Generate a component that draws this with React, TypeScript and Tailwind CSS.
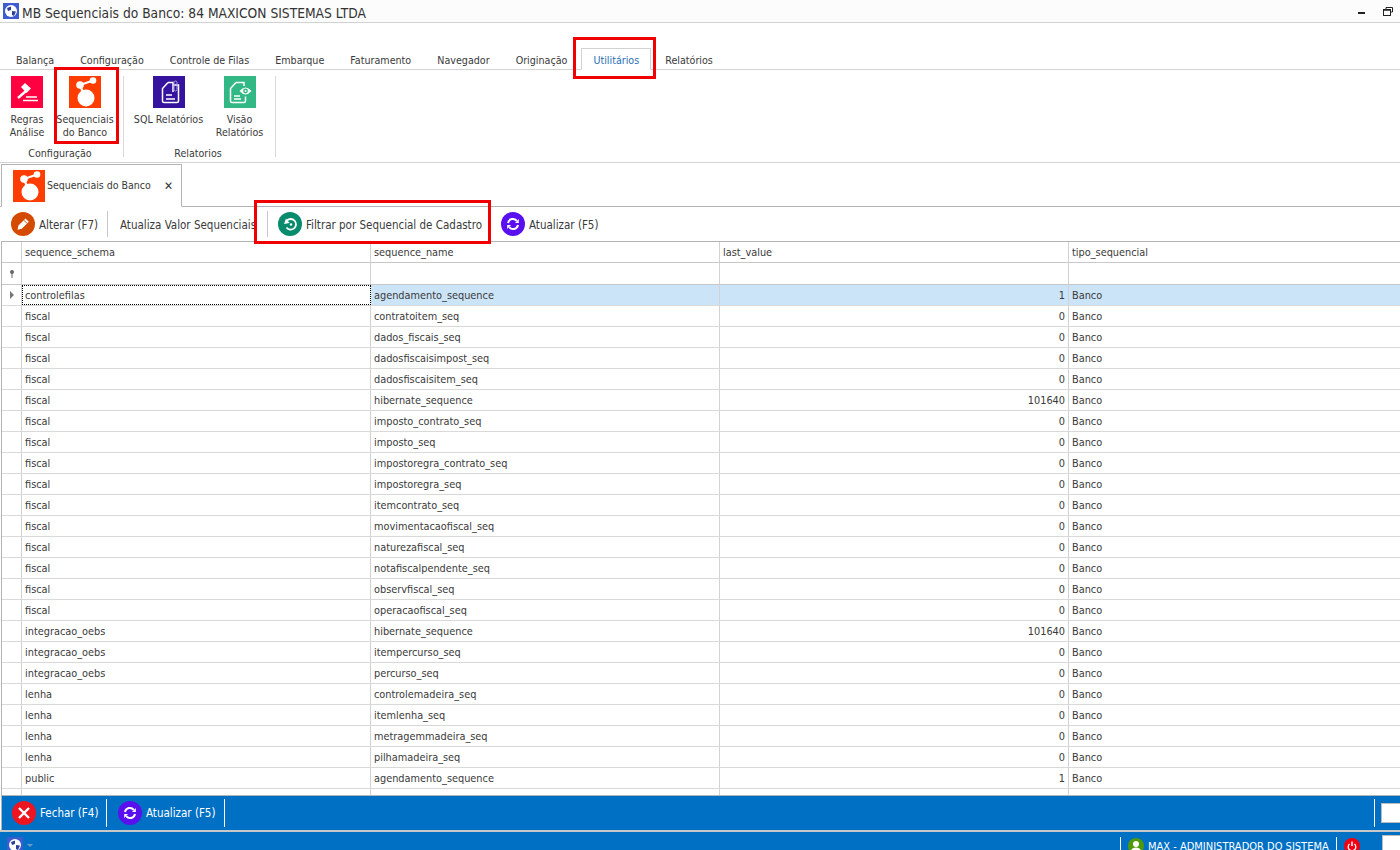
import React from 'react';

const FONT = "font-['DejaVu_Sans_Condensed','Noto_Sans',sans-serif]";

const rows: [string, string, string][] = [
  ['controlefilas', 'agendamento_sequence', '1'],
  ['fiscal', 'contratoitem_seq', '0'],
  ['fiscal', 'dados_fiscais_seq', '0'],
  ['fiscal', 'dadosfiscaisimpost_seq', '0'],
  ['fiscal', 'dadosfiscaisitem_seq', '0'],
  ['fiscal', 'hibernate_sequence', '101640'],
  ['fiscal', 'imposto_contrato_seq', '0'],
  ['fiscal', 'imposto_seq', '0'],
  ['fiscal', 'impostoregra_contrato_seq', '0'],
  ['fiscal', 'impostoregra_seq', '0'],
  ['fiscal', 'itemcontrato_seq', '0'],
  ['fiscal', 'movimentacaofiscal_seq', '0'],
  ['fiscal', 'naturezafiscal_seq', '0'],
  ['fiscal', 'notafiscalpendente_seq', '0'],
  ['fiscal', 'observfiscal_seq', '0'],
  ['fiscal', 'operacaofiscal_seq', '0'],
  ['integracao_oebs', 'hibernate_sequence', '101640'],
  ['integracao_oebs', 'itempercurso_seq', '0'],
  ['integracao_oebs', 'percurso_seq', '0'],
  ['lenha', 'controlemadeira_seq', '0'],
  ['lenha', 'itemlenha_seq', '0'],
  ['lenha', 'metragemmadeira_seq', '0'],
  ['lenha', 'pilhamadeira_seq', '0'],
  ['public', 'agendamento_sequence', '1'],
  ['public', '', ''],
];

const tabs = ['Balança', 'Configuração', 'Controle de Filas', 'Embarque', 'Faturamento', 'Navegador', 'Originação', 'Utilitários', 'Relatórios'];

const SeqIcon = ({ size }: { size: number }) => (
  <svg width={size} height={size} viewBox="0 0 32 32" className="shrink-0">
    <rect width="32" height="32" fill="#ff3d00" />
    <path d="M11 9 L24 4.500 M11 9 L15 19" stroke="#fff" strokeWidth="2.200" />
    <circle cx="11" cy="9" r="3.800" fill="#fff" />
    <circle cx="24" cy="4.500" r="3.300" fill="#fff" />
    <circle cx="17" cy="22" r="8.500" fill="#fff" />
  </svg>
);

const GavelIcon = () => (
  <svg width="32" height="32" viewBox="0 0 32 32" className="shrink-0">
    <rect width="32" height="32" fill="#ff0040" />
    <path d="M7 22 L15 15" stroke="#fff" strokeWidth="2.400" />
    <path d="M10 11 L14 7 L20 12.500 L15.500 17 Z" fill="#fff" />
    <path d="M15 21 H26 M12 24.500 H27" stroke="#fff" strokeWidth="1.500" />
  </svg>
);

const SqlIcon = () => (
  <svg width="32" height="32" viewBox="0 0 32 32" className="shrink-0">
    <rect width="32" height="32" fill="#35139f" />
    <path d="M15 6.500 L9.500 12.500 V25 Q9.500 26.500 11 26.500 H24 Q25.500 26.500 25.500 25 V9 H20" fill="none" stroke="#fff" strokeWidth="1.500" />
    <path d="M15 6.500 H20 V16" fill="none" stroke="#fff" strokeWidth="1.500" />
    <path d="M13 19 H19 M13 23 H22" stroke="#fff" strokeWidth="1.500" />
    <rect x="21" y="5" width="3" height="10" rx="1.500" fill="none" stroke="#a9a0d8" strokeWidth="1" />
  </svg>
);

const VisaoIcon = () => (
  <svg width="32" height="32" viewBox="0 0 32 32" className="shrink-0">
    <rect width="32" height="32" fill="#32b884" />
    <path d="M12 6.500 H20 V10 M12 6.500 L6.500 12.500 V25 Q6.500 26.500 8 26.500 H20 Q21.500 26.500 21.500 25 V20.500" fill="none" stroke="#fff" strokeWidth="1.500" />
    <path d="M10 20 H16 M10 23 H17" stroke="#fff" strokeWidth="1.500" />
    <path d="M15.500 15 Q21.500 8 27.500 15 Q21.500 22 15.500 15 Z" fill="#fff" />
    <circle cx="21.500" cy="15" r="2.400" fill="#32b884" />
    <circle cx="21.500" cy="15" r="1" fill="#fff" />
  </svg>
);

const PencilCircle = () => (
  <svg width="24" height="24" viewBox="0 0 24 24" className="shrink-0">
    <circle cx="12" cy="12" r="12" fill="#d34a00" />
    <path d="M6.500 17.800 L7.500 13.500 L14.500 6.500 L17.800 9.800 L10.800 16.800 Z" fill="#fff" />
    <path d="M12.800 8.200 L16 11.400" stroke="#d34a00" strokeWidth="1" />
  </svg>
);

const FilterCircle = () => (
  <svg width="24" height="24" viewBox="0 0 24 24" className="shrink-0">
    <circle cx="12" cy="12" r="12" fill="#078b6d" />
    <path d="M9 8.500 A5.300 5.300 0 1 1 8.500 15.500" fill="none" stroke="#fff" strokeWidth="1.800" />
    <path d="M6 12 L11.500 11 L8 6.500 Z" fill="#fff" />
    <circle cx="13" cy="12.500" r="1.200" fill="#fff" />
  </svg>
);

const RefreshCircle = () => (
  <svg width="24" height="24" viewBox="0 0 24 24" className="shrink-0">
    <circle cx="12" cy="12" r="12" fill="#5a10ee" />
    <path d="M7 11 A5 5 0 0 1 15.800 8.800" fill="none" stroke="#fff" strokeWidth="2" />
    <path d="M17 13 A5 5 0 0 1 8.200 15.200" fill="none" stroke="#fff" strokeWidth="2" />
    <path d="M17.800 7 V11 H14 Z M6.200 17 V13 H10 Z" fill="#fff" />
  </svg>
);

const CloseCircle = () => (
  <svg width="24" height="24" viewBox="0 0 24 24" className="shrink-0">
    <circle cx="12" cy="12" r="12" fill="#ee1420" />
    <path d="M7 7 L17 17 M17 7 L7 17" stroke="#fff" strokeWidth="2.400" />
  </svg>
);

const Globe = ({ size }: { size: number }) => (
  <svg width={size} height={size} viewBox="0 0 16 16" className="shrink-0">
    <rect width="16" height="16" fill="#3f5bd0" />
    <circle cx="8" cy="8" r="6" fill="#fff" />
    <path d="M4 5 L8 3.500 L8 7 L5 8 Z M9 8 L13 8.500 L11 13 L9 12 Z" fill="#2c3f9a" />
  </svg>
);

const UserCircle = () => (
  <svg width="16" height="16" viewBox="0 0 16 16" className="shrink-0">
    <circle cx="8" cy="8" r="8" fill="#4f9a06" />
    <circle cx="8" cy="6" r="3" fill="#fff" />
    <path d="M3 14 Q3 9.500 8 9.500 Q13 9.500 13 14 Z" fill="#fff" />
  </svg>
);

const PowerCircle = () => (
  <svg width="16" height="16" viewBox="0 0 16 16" className="shrink-0">
    <circle cx="8" cy="8" r="8" fill="#f00010" />
    <path d="M8 3.500 V8" stroke="#fff" strokeWidth="1.500" />
    <path d="M5.500 6 A3.800 3.800 0 1 0 10.500 6" fill="none" stroke="#fff" strokeWidth="1.300" />
  </svg>
);

const RibbonButton = ({ icon, lines, width }: { icon: React.ReactNode; lines: string[]; width: string }) => (
  <div className={`flex flex-col items-center ${width}`}>
    {icon}
    <div className="mt-[5px] text-center leading-[13px] whitespace-nowrap">
      {lines.map((l) => (
        <div key={l}>{l}</div>
      ))}
    </div>
  </div>
);

const RedBox = ({ className }: { className: string }) => (
  <div className={`absolute border-[3px] border-[#f00000] pointer-events-none ${className}`} />
);

export default function App() {
  return (
    <div className={`${FONT} relative w-[1400px] h-[850px] overflow-hidden bg-white text-[10.600px] text-[#3a3a3a] flex flex-col`}>
      {/* title bar */}
      <div className="h-[23px] shrink-0 flex items-center bg-[#fcfcfc] border-b border-[#d2d2d2] pl-[3px] pr-[7px]">
        <Globe size={16} />
        <span className="ml-[3px] pt-[4px] text-[13.700px] text-[#333]">MB Sequenciais do Banco: 84 MAXICON SISTEMAS LTDA</span>
        <div className="ml-auto flex items-center gap-[18px]">
          <div className="w-[7px] h-[2px] bg-[#222] mt-1" />
          <svg width="10" height="9" viewBox="0 0 10 9" fill="none" stroke="#222">
            <path d="M3 2.500 V.5 H9.500 V5 H7.500" />
            <rect x=".5" y="2.500" width="7" height="6" />
            <path d="M.5 3 H7.500" strokeWidth="1.500" />
          </svg>
        </div>
      </div>

      {/* ribbon tabs */}
      <div className="h-[47px] shrink-0 flex items-end gap-[26px] pl-[16px] border-b border-[#d2d2d2] text-[10.650px]">
        {tabs.map((t) =>
          t === 'Utilitários' ? (
            <div key={t} className="h-[22px] -mb-px -mx-[12px] px-[11px] pt-[3px] flex items-center bg-white border border-b-white border-[#d2d2d2] text-[#1f6fb5]">
              {t}
            </div>
          ) : (
            <div key={t} className="h-[20px] pt-[4px] flex items-center">{t}</div>
          ),
        )}
      </div>

      {/* ribbon groups */}
      <div className="h-[93px] shrink-0 flex border-b border-[#d2d2d2] pt-[6px]">
        <div className="w-[124px] h-[81px] border-r border-[#d9d9d9] flex flex-col">
          <div className="flex pl-[5px] h-[63px]">
            <RibbonButton icon={<GavelIcon />} lines={['Regras', 'Análise']} width="w-[44px]" />
            <RibbonButton icon={<SeqIcon size={32} />} lines={['Sequenciais', 'do Banco']} width="w-[72px]" />
          </div>
          <div className="mt-auto text-center pr-[3px] leading-[7px]">Configuração</div>
        </div>
        <div className="w-[152px] h-[81px] border-r border-[#d9d9d9] flex flex-col">
          <div className="flex pl-[9px] h-[63px]">
            <RibbonButton icon={<SqlIcon />} lines={['SQL Relatórios']} width="w-[72px]" />
            <RibbonButton icon={<VisaoIcon />} lines={['Visão', 'Relatórios']} width="w-[72px]" />
          </div>
          <div className="mt-auto text-center pr-[3px] leading-[7px]">Relatorios</div>
        </div>
      </div>

      {/* document tab */}
      <div className="h-[44px] shrink-0 flex items-end pl-px pt-px border-b border-[#b4b4b4]">
        <div className="h-[43px] -mb-px w-[181px] bg-white border border-b-white border-[#b4b4b4] flex items-center pl-[11px]">
          <SeqIcon size={32} />
          <span className="ml-[2px] text-[10.500px]">Sequenciais do Banco</span>
          <span className="ml-auto mr-[8px] text-[#333] font-bold text-[12px]">✕</span>
        </div>
      </div>

      {/* toolbar */}
      <div className="h-[34px] shrink-0 flex items-center pl-[11px] whitespace-nowrap text-[11.500px]">
        <PencilCircle />
        <span className="ml-[4px] pt-[3px] w-[68px]">Alterar (F7)</span>
        <div className="w-px h-[26px] bg-[#c8c8c8]" />
        <span className="ml-[12px] pt-[3px] w-[147px] overflow-hidden">Atualiza Valor Sequenciais</span>
        <div className="w-px h-[26px] bg-[#c8c8c8]" />
        <div className="ml-[10px]"><FilterCircle /></div>
        <span className="ml-[4px] pt-[3px] w-[195px]">Filtrar por Sequencial de Cadastro</span>
        <RefreshCircle />
        <span className="ml-[4px] pt-[3px]">Atualizar (F5)</span>
      </div>

      {/* grid */}
      <div className="flex-1 min-h-0 overflow-hidden border-t border-l ml-px border-[#b4b4b4] text-[10.850px]">
        <div className="grid grid-cols-[20px_349px_349px_349px_1fr] h-[21px] border-b border-[#c8c8c8]">
          <div className="border-r border-[#d2d2d2]" />
          {['sequence_schema', 'sequence_name', 'last_value'].map((h) => (
            <div key={h} className="border-r border-[#d2d2d2] pl-[3px] pt-[2px] flex items-center">{h}</div>
          ))}
          <div className="pl-[3px] pt-[2px] flex items-center">tipo_sequencial</div>
        </div>
        <div className="grid grid-cols-[20px_349px_349px_349px_1fr] h-[22px] border-b border-[#c8c8c8]">
          <div className="border-r border-[#d2d2d2] flex items-center justify-center">
            <svg width="6" height="8" viewBox="0 0 6 8" fill="#666"><circle cx="3" cy="2" r="2" /><rect x="2.500" y="3" width="1" height="5" /></svg>
          </div>
          <div className="border-r border-[#d2d2d2]" />
          <div className="border-r border-[#d2d2d2]" />
          <div className="border-r border-[#d2d2d2]" />
          <div />
        </div>
        {rows.map((r, i) => (
          <div key={i} className="grid grid-cols-[20px_349px_349px_349px_1fr] h-[21px] border-b border-[#d9d9d9]">
            <div className="border-r border-[#d2d2d2] flex items-center justify-center">
              {i === 0 && <div className="border-y-[4px] border-l-[4px] border-y-transparent border-l-[#777]" />}
            </div>
            <div className={`pt-[2px] flex items-center ${i === 0 ? 'pl-[2px] border border-dotted border-black' : 'pl-[3px] border-r border-[#d2d2d2]'}`}>{r[0]}</div>
            <div className={`pl-[3px] pt-[2px] flex items-center border-r border-[#d2d2d2] ${i === 0 ? 'bg-[#cce4f7]' : ''}`}>{r[1]}</div>
            <div className={`pr-[3px] pt-[2px] flex items-center justify-end border-r border-[#d2d2d2] ${i === 0 ? 'bg-[#cce4f7]' : ''}`}>{r[2]}</div>
            <div className={`pl-[3px] pt-[2px] flex items-center ${i === 0 ? 'bg-[#cce4f7]' : ''}`}>{r[2] ? 'Banco' : ''}</div>
          </div>
        ))}
      </div>

      {/* bottom action bar */}
      <div className="h-[35px] shrink-0 ml-px bg-[#0070c4] border-l border-t border-[#b4b4b4] flex items-center pl-[10px] text-white text-[11.500px]">
        <CloseCircle />
        <span className="ml-[4px] pt-[2px] w-[66px]">Fechar (F4)</span>
        <div className="w-px h-[28px] bg-white" />
        <div className="ml-[11px]"><RefreshCircle /></div>
        <span className="ml-[4px] pt-[2px] w-[78px]">Atualizar (F5)</span>
        <div className="w-px h-[28px] bg-white" />
        <div className="ml-auto w-px h-[28px] bg-white" />
        <div className="ml-[6px] w-[19px] h-[20px] bg-white border border-[#bbb] border-r-0" />
      </div>

      {/* status bar */}
      <div className="h-[20px] shrink-0 bg-[#0070c4] border-t-2 border-[#c8c8c8] flex items-start pl-[7px] text-white text-[11px]">
        <div className="mt-[5px]"><Globe size={16} /></div>
        <div className="mt-[12px] ml-[4px] border-x-[3px] border-t-[3px] border-x-transparent border-t-[#6d9ac4]" />
        <div className="ml-auto mt-[5px] h-[17px] border-l border-white pl-[7px] pt-[1px] flex items-start">
          <UserCircle />
          <span className="ml-[4px] w-[188px] whitespace-nowrap leading-[16px] pt-[1px]">MAX - ADMINISTRADOR DO SISTEMA</span>
        </div>
        <div className="mt-[5px] h-[17px] border-l border-white pl-[7px] pt-[1px]">
          <PowerCircle />
        </div>
        <div className="ml-[22px] w-[18px] h-[17px] mt-[3px] bg-white border border-[#bbb] border-r-0" />
      </div>

      {/* annotation boxes */}
      <RedBox className="left-[54px] top-[67px] w-[65px] h-[77px]" />
      <RedBox className="left-[573px] top-[37px] w-[83px] h-[42px]" />
      <RedBox className="left-[254px] top-[200px] w-[237px] h-[44px]" />
    </div>
  );
}
